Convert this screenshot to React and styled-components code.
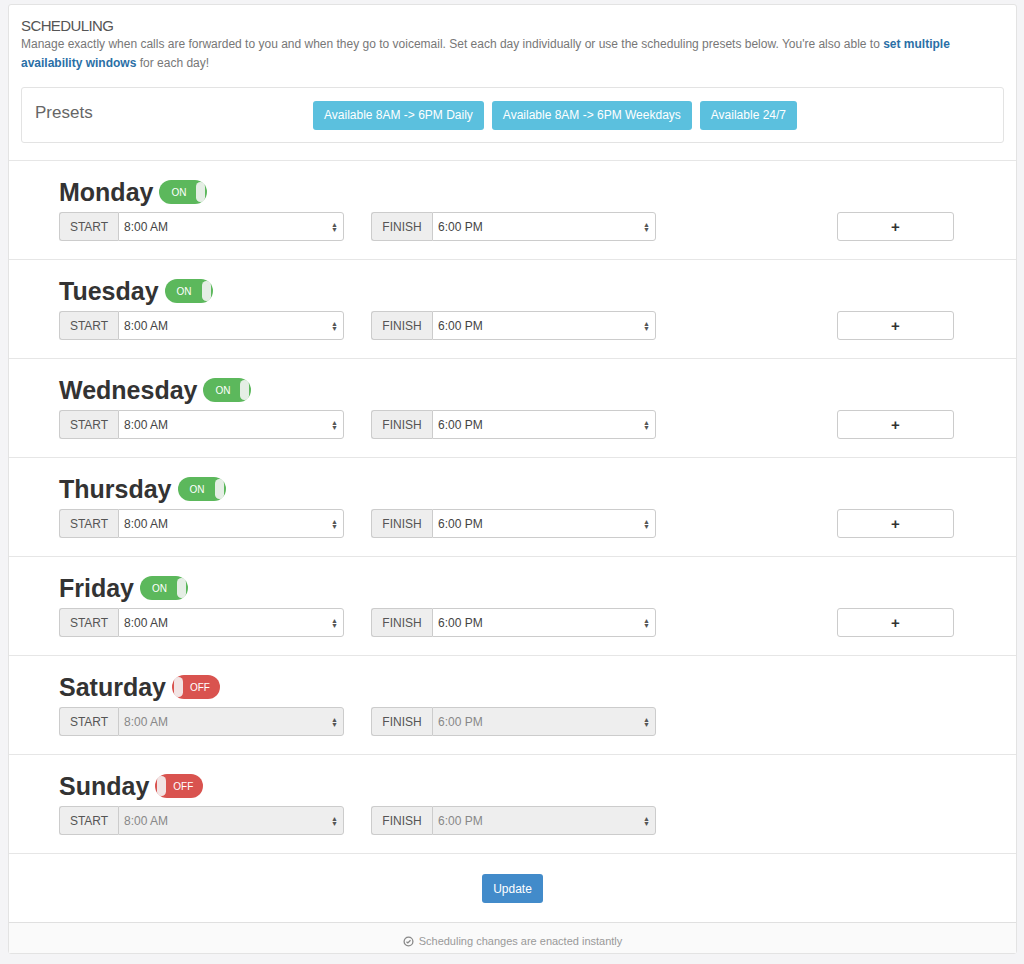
import React from "react";
import styled, { createGlobalStyle } from "styled-components";

const Global = createGlobalStyle`
  body { margin: 0; background: #f4f4f6; font-family: "Helvetica Neue", "Liberation Sans", Arial, sans-serif; }
`;

const Page = styled.div`
  padding: 4px 7px 8px 8px;
`;
const Card = styled.div`
  background: #fff;
  border: 1px solid #e3e3e3;
  border-radius: 3px;
`;
const Header = styled.div`
  padding: 12px 12px 17px 12px;
`;
const Title = styled.div`
  font-size: 15px;
  color: #555;
  font-weight: 300;
  letter-spacing: -0.6px;
  line-height: 18px;
`;
const Desc = styled.p`
  margin: 0 0 14px;
  font-size: 12px;
  line-height: 19px;
  color: #777;
  a { color: #2a6fa6; font-weight: bold; text-decoration: none; }
`;
const PresetBox = styled.div`
  border: 1px solid #e3e3e3;
  border-radius: 3px;
  height: 54px;
  display: flex;
  align-items: center;
  padding: 0 13px;
`;
const PresetLabel = styled.div`
  font-size: 17px;
  color: #666;
  width: 278px;
  margin-top: -4px;
`;
const PresetBtns = styled.div`
  display: flex;
  gap: 8px;
`;
const InfoBtn = styled.button`
  background: #5bc0de;
  border: none;
  border-radius: 3px;
  color: #fff;
  font-size: 12px;
  font-family: inherit;
  height: 29px;
  padding: 0 11px;
`;
const DayRow = styled.div`
  border-top: 1px solid #e6e6e6;
  height: 99px;
  padding: 17px 0 0 50px;
  box-sizing: border-box;
`;
const DayHead = styled.div`
  display: flex;
  align-items: center;
  gap: 6px;
  height: 28px;
  margin-bottom: 6px;
`;
const DayName = styled.div`
  font-size: 25px;
  font-weight: 600;
  color: #333;
  letter-spacing: 0;
`;
const Toggle = styled.div`
  width: 48px;
  height: 24px;
  border-radius: 12px;
  background: ${p => (p.on ? "#5cb85c" : "#d9534f")};
  position: relative;
  box-sizing: border-box;
  font-size: 10px;
  color: #fff;
  display: flex;
  align-items: center;
  justify-content: ${p => (p.on ? "flex-start" : "flex-end")};
  padding-left: ${p => (p.on ? "12px" : "0")};
  padding-right: ${p => (p.on ? "0" : "10px")};
  &::after {
    content: "";
    position: absolute;
    top: 2px;
    ${p => (p.on ? "right: 2px;" : "left: 2px;")}
    width: 9px;
    height: 20px;
    border-radius: 10px;
    background: #f4f4f4;
    opacity: 0.9;
  }
`;
const Controls = styled.div`
  display: flex;
  align-items: center;
`;
const Group = styled.div`
  display: flex;
  width: 285px;
  height: 29px;
  margin-right: 27px;
`;
const Addon = styled.div`
  background: #eee;
  border: 1px solid #ccc;
  border-right: none;
  border-radius: 3px 0 0 3px;
  color: #555;
  font-size: 12px;
  width: ${p => p.w}px;
  display: flex;
  align-items: center;
  justify-content: center;
  box-sizing: border-box;
`;
const Select = styled.div`
  flex: 1;
  border: 1px solid #ccc;
  border-radius: 0 3px 3px 0;
  background: ${p => (p.disabled ? "#eee" : "#fff")};
  color: ${p => (p.disabled ? "#888" : "#444")};
  font-size: 12px;
  display: flex;
  align-items: center;
  justify-content: space-between;
  padding: 0 5px;
`;
const Arrows = styled.span`
  font-size: 7px;
  line-height: 5px;
  color: #555;
  display: flex;
  flex-direction: column;
`;
const PlusBtn = styled.button`
  margin-left: 154px;
  width: 117px;
  height: 29px;
  border: 1px solid #ccc;
  border-radius: 3px;
  background: #fff;
  color: #333;
  font-size: 15px;
  font-weight: bold;
  font-family: inherit;
`;
const UpdateRow = styled.div`
  border-top: 1px solid #e6e6e6;
  height: 68px;
  display: flex;
  justify-content: center;
  align-items: center;
`;
const UpdateBtn = styled.button`
  background: #428bca;
  color: #fff;
  border: none;
  border-radius: 3px;
  height: 29px;
  padding: 0 11px;
  font-size: 12px;
  font-family: inherit;
  margin-top: 1px;
`;
const Footer = styled.div`
  border-top: 1px solid #e0e0e0;
  background: #fafafa;
  height: 31px;
  display: flex;
  justify-content: center;
  align-items: center;
  gap: 5px;
  font-size: 11px;
  color: #999;
  padding-top: 6px;
  box-sizing: border-box;
`;

const days = [
  ["Monday", true], ["Tuesday", true], ["Wednesday", true], ["Thursday", true],
  ["Friday", true], ["Saturday", false], ["Sunday", false],
];

const Sel = ({ value, disabled }) => (
  <Select disabled={disabled}>
    {value}
    <Arrows><span>▲</span><span>▼</span></Arrows>
  </Select>
);

export default function App() {
  return (
    <Page>
      <Global />
      <Card>
        <Header>
          <Title>SCHEDULING</Title>
          <Desc>
            Manage exactly when calls are forwarded to you and when they go to voicemail. Set each day individually or use the scheduling presets below. You're also able to <a>set multiple availability windows</a> for each day!
          </Desc>
          <PresetBox>
            <PresetLabel>Presets</PresetLabel>
            <PresetBtns>
              <InfoBtn>Available 8AM -&gt; 6PM Daily</InfoBtn>
              <InfoBtn>Available 8AM -&gt; 6PM Weekdays</InfoBtn>
              <InfoBtn>Available 24/7</InfoBtn>
            </PresetBtns>
          </PresetBox>
        </Header>
        {days.map(([d, on]) => (
          <DayRow key={d}>
            <DayHead>
              <DayName>{d}</DayName>
              <Toggle on={on}>{on ? "ON" : "OFF"}</Toggle>
            </DayHead>
            <Controls>
              <Group>
                <Addon w={59}>START</Addon>
                <Sel value="8:00 AM" disabled={!on} />
              </Group>
              <Group>
                <Addon w={61}>FINISH</Addon>
                <Sel value="6:00 PM" disabled={!on} />
              </Group>
              {on && <PlusBtn>+</PlusBtn>}
            </Controls>
          </DayRow>
        ))}
        <UpdateRow><UpdateBtn>Update</UpdateBtn></UpdateRow>
        <Footer>
          <svg width="11" height="11" viewBox="0 0 12 12" fill="none" stroke="#888" strokeWidth="1.4">
            <circle cx="6" cy="6" r="4.8" />
            <path d="M3.8 6.2l1.5 1.4 2.9-3" />
          </svg>
          Scheduling changes are enacted instantly
        </Footer>
      </Card>
    </Page>
  );
}
